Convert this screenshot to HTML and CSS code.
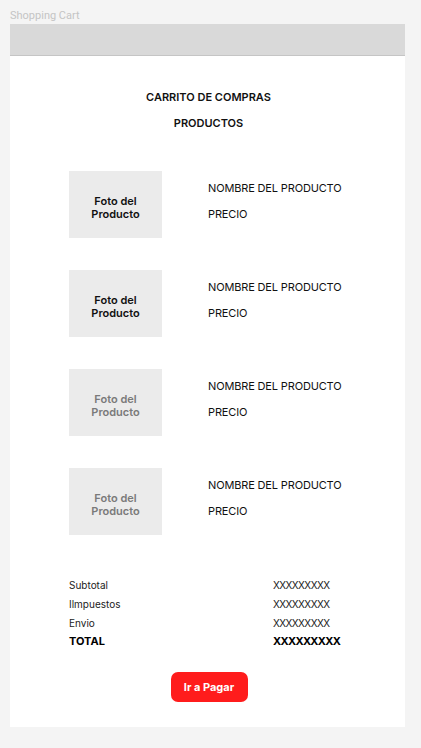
FILE: index.html
```html
<!DOCTYPE html>
<html lang="es">
<head>
<meta charset="utf-8">
<title>Shopping Cart</title>
<link rel="stylesheet" href="styles.css">
</head>
<body>
<div class="page">
  <div class="label">Shopping Cart</div>
  <div class="frame">
    <div class="topbar"></div>
    <div class="content">
      <h1 class="title">CARRITO DE COMPRAS</h1>
      <h2 class="subtitle">PRODUCTOS</h2>
      <div class="products">
        <div class="product">
          <div class="photo">Foto del<br>Producto</div>
          <div class="info"><div>NOMBRE DEL PRODUCTO</div><div>PRECIO</div></div>
        </div>
        <div class="product">
          <div class="photo">Foto del<br>Producto</div>
          <div class="info"><div>NOMBRE DEL PRODUCTO</div><div>PRECIO</div></div>
        </div>
        <div class="product">
          <div class="photo faded">Foto del<br>Producto</div>
          <div class="info"><div>NOMBRE DEL PRODUCTO</div><div>PRECIO</div></div>
        </div>
        <div class="product">
          <div class="photo faded">Foto del<br>Producto</div>
          <div class="info"><div>NOMBRE DEL PRODUCTO</div><div>PRECIO</div></div>
        </div>
      </div>
      <div class="summary">
        <div class="row"><span>Subtotal</span><span class="val">XXXXXXXXX</span></div>
        <div class="row"><span>Ilmpuestos</span><span class="val">XXXXXXXXX</span></div>
        <div class="row"><span>Envio</span><span class="val">XXXXXXXXX</span></div>
        <div class="row total"><span>TOTAL</span><span class="val">XXXXXXXXX</span></div>
      </div>
      <div class="actions"><button class="pay">Ir a Pagar</button></div>
    </div>
  </div>
</div>
</body>
</html>
```
FILE: styles.css
```css
* { box-sizing: border-box; }
html, body { margin: 0; padding: 0; }
body {
  background: #f4f4f4;
  font-family: Inter, "Liberation Sans", sans-serif;
  color: #111;
  width: 421px;
  height: 748px;
  overflow: hidden;
}
.page { padding: 9px 16px 0 10px; }
.label {
  font-family: Roboto, "Liberation Sans", sans-serif;
  font-size: 11px;
  line-height: 14px;
  height: 15px;
  color: #c4c4c4;
}
.frame {
  width: 395px;
  height: 703px;
  background: #fff;
}
.topbar {
  height: 32px;
  background: #d9d9d9;
  border-bottom: 1px solid #c5c5c5;
}
.content { padding: 0 0 0 59px; }
.title, .subtitle {
  margin: 0;
  font-size: 11px;
  font-weight: 600;
  line-height: 14px;
  text-align: center;
  width: 279px;
}
.title { padding-top: 34px; }
.subtitle { padding-top: 12px; }
.products {
  display: flex;
  flex-direction: column;
  gap: 32px;
  padding-top: 41px;
}
.product {
  display: flex;
  gap: 46px;
}
.photo {
  width: 93px;
  height: 67px;
  background: #ebebeb;
  display: flex;
  align-items: center;
  justify-content: center;
  text-align: center;
  font-size: 11px;
  font-weight: 600;
  line-height: 13px;
  color: #111;
  padding-top: 6px;
}
.photo.faded { color: #7a7a7a; }
.info {
  display: flex;
  flex-direction: column;
  gap: 12px;
  padding-top: 10px;
  font-size: 11px;
  line-height: 14px;
  letter-spacing: -0.15px;
  color: #111;
}
.summary {
  padding-top: 43px;
  display: flex;
  flex-direction: column;
  gap: 5px;
  width: 272px;
}
.row {
  display: flex;
  justify-content: space-between;
  font-size: 10px;
  line-height: 14px;
  color: #222;
}
.row .val { width: 68px; letter-spacing: -0.55px; }
.row.total { font-size: 11px; font-weight: 700; color: #000; margin-top: -1px; }
.row.total .val { letter-spacing: -0.65px; }
.actions {
  width: 279px;
  display: flex;
  justify-content: center;
  padding-top: 24px;
}
.pay {
  width: 77px;
  height: 30px;
  border: none;
  border-radius: 7px;
  background: #ff1c1c;
  color: #fff;
  font-family: Inter, "Liberation Sans", sans-serif;
  font-size: 11px;
  font-weight: 700;
  margin-left: 1px;
}
```
